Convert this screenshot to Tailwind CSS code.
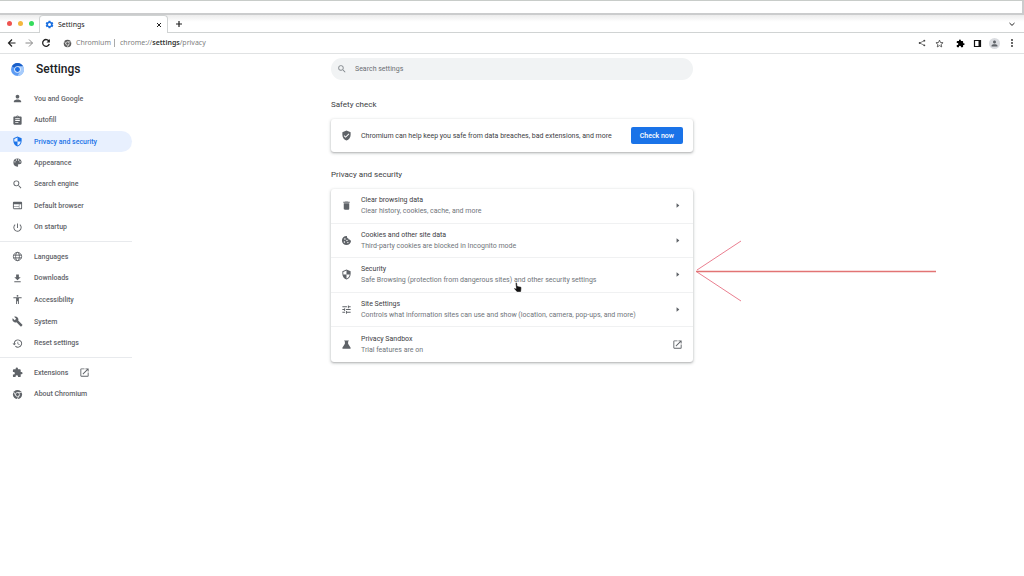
<!DOCTYPE html>
<html lang="en">
<head>
<meta charset="utf-8">
<title>Settings</title>
<script src="https://cdn.jsdelivr.net/npm/@tailwindcss/browser@4"></script>
</head>
<body class="relative min-h-screen overflow-x-hidden bg-white font-['Roboto',sans-serif] text-[7px] leading-[10px] text-[#3c4043]">

<svg class="hidden">
  <symbol id="person" viewBox="0 0 24 24"><path d="M12 12c2.200 0 4-1.800 4-4s-1.800-4-4-4-4 1.800-4 4 1.800 4 4 4zm0 2c-2.700 0-8 1.300-8 4v2h16v-2c0-2.700-5.300-4-8-4z"/></symbol>
  <symbol id="clipboard" viewBox="0 0 24 24"><path d="M19 3h-4.200a3 3 0 0 0-5.600 0H5a2 2 0 0 0-2 2v14c0 1.100.9 2 2 2h14a2 2 0 0 0 2-2V5a2 2 0 0 0-2-2zm-7 0a1 1 0 1 1 0 2 1 1 0 0 1 0-2zm2 14H7v-2h7v2zm3-4H7v-2h10v2zm0-4H7V7h10v2z"/></symbol>
  <symbol id="shield" viewBox="0 0 24 24"><path d="M12 1 3 5v6c0 5.550 3.840 10.740 9 12 5.160-1.260 9-6.450 9-12V5l-9-4zm0 10.990h7c-.53 4.120-3.280 7.790-7 8.940V12H5V6.300l7-3.110v8.800z"/></symbol>
  <symbol id="shieldcheck" viewBox="0 0 24 24"><path d="M12 1 3 5v6c0 5.550 3.840 10.740 9 12 5.160-1.260 9-6.450 9-12V5l-9-4zm-2 16-4-4 1.410-1.410L10 14.170l6.590-6.590L18 9l-8 8z"/></symbol>
  <symbol id="palette" viewBox="0 0 24 24"><path d="M12 3a9 9 0 0 0 0 18c.83 0 1.500-.67 1.500-1.500 0-.39-.15-.74-.39-1.010-.23-.26-.38-.61-.38-.99 0-.83.67-1.500 1.500-1.500H16a5 5 0 0 0 5-5c0-4.420-4.030-8-9-8zm-5.500 9a1.500 1.500 0 1 1 0-3 1.500 1.500 0 0 1 0 3zm3-4a1.500 1.500 0 1 1 0-3 1.500 1.500 0 0 1 0 3zm5 0a1.500 1.500 0 1 1 0-3 1.500 1.500 0 0 1 0 3zm3 4a1.500 1.500 0 1 1 0-3 1.500 1.500 0 0 1 0 3z"/></symbol>
  <symbol id="search" viewBox="0 0 24 24"><path d="M15.500 14h-.79l-.28-.27A6.470 6.470 0 0 0 16 9.500 6.500 6.500 0 1 0 9.500 16c1.610 0 3.090-.59 4.230-1.570l.27.28v.79l5 4.990L20.490 19l-4.990-5zm-6 0a4.500 4.500 0 1 1 0-9 4.500 4.500 0 0 1 0 9z"/></symbol>
  <symbol id="browser" viewBox="0 0 24 24"><path d="M20 4H4a2 2 0 0 0-2 2v12c0 1.100.9 2 2 2h16a2 2 0 0 0 2-2V6a2 2 0 0 0-2-2zm-5 14H4v-4h11v4zm0-5H4V9h11v4zm5 5h-4V9h4v9z"/></symbol>
  <symbol id="power" viewBox="0 0 24 24"><path d="M13 3h-2v10h2V3zm4.830 2.170-1.420 1.420A6.920 6.920 0 0 1 19 12a7 7 0 1 1-11.420-5.420L6.170 5.170A9 9 0 1 0 21 12c0-2.740-1.230-5.180-3.170-6.830z"/></symbol>
  <symbol id="globe" viewBox="0 0 24 24"><g fill="none" stroke="currentColor" stroke-width="2"><circle cx="12" cy="12" r="9"/><ellipse cx="12" cy="12" rx="4.200" ry="9"/><path d="M3.500 9h17M3.500 15h17"/></g></symbol>
  <symbol id="download" viewBox="0 0 24 24"><path d="M19 9h-4V3H9v6H5l7 7 7-7zM5 18v2h14v-2H5z"/></symbol>
  <symbol id="access" viewBox="0 0 24 24"><path d="M12 2a2 2 0 1 1 0 4 2 2 0 0 1 0-4zm9 7h-6v13h-2v-6h-2v6H9V9H3V7h18v2z"/></symbol>
  <symbol id="wrench" viewBox="0 0 24 24"><path d="m22.700 19-9.100-9.100c.9-2.300.4-5-1.500-6.900-2-2-5-2.400-7.400-1.300L9 6 6 9 1.600 4.700C.4 7.100.9 10.100 2.900 12.100c1.900 1.900 4.600 2.400 6.900 1.500l9.100 9.100c.4.4 1 .4 1.400 0l2.300-2.300c.5-.4.5-1.100.1-1.400z"/></symbol>
  <symbol id="restore" viewBox="0 0 24 24"><path d="M13 3a9 9 0 0 0-9 9H1l3.890 3.890.07.14L9 12H6a7 7 0 1 1 2.060 4.940l-1.420 1.420A9 9 0 1 0 13 3zm-1 5v5l4.280 2.540.72-1.210-3.500-2.080V8H12z"/></symbol>
  <symbol id="puzzle" viewBox="0 0 24 24"><path d="M20.500 11H19V7a2 2 0 0 0-2-2h-4V3.500a2.500 2.500 0 0 0-5 0V5H4a2 2 0 0 0-2 2v3.800h1.500a2.700 2.700 0 0 1 0 5.400H2V20c0 1.100.9 2 2 2h3.800v-1.500a2.700 2.700 0 0 1 5.400 0V22H17a2 2 0 0 0 2-2v-4h1.500a2.500 2.500 0 0 0 0-5z"/></symbol>
  <symbol id="chrome" viewBox="0 0 24 24"><circle cx="12" cy="12" r="10"/><circle cx="12" cy="12" r="4.500" fill="none" stroke="#fff" stroke-width="1.600"/><path d="M12 7.500h9M8.100 14.200 3.600 6.400M15.900 14.200l-4.500 7.800" stroke="#fff" stroke-width="1.600"/></symbol>
  <symbol id="launch" viewBox="0 0 24 24"><path d="M19 19H5V5h7V3H5a2 2 0 0 0-2 2v14c0 1.100.9 2 2 2h14a2 2 0 0 0 2-2v-7h-2v7zM14 3v2h3.590l-9.830 9.830 1.410 1.410L19 6.410V10h2V3h-7z"/></symbol>
  <symbol id="trash" viewBox="0 0 24 24"><path d="M6 19c0 1.100.9 2 2 2h8a2 2 0 0 0 2-2V7H6v12zM19 4h-3.500l-1-1h-5l-1 1H5v2h14V4z"/></symbol>
  <symbol id="cookie" viewBox="0 0 24 24"><path fill-rule="evenodd" d="M12 2a10 10 0 1 0 10 10c-1.500.3-2.700-.6-3-2-2 .2-3.400-1.200-3-3-2 0-3.400-1.700-3-5zM8.500 7a1.800 1.800 0 1 1 0 3.600 1.800 1.800 0 0 1 0-3.600zM7.500 13.500a1.600 1.600 0 1 1 0 3.200 1.600 1.600 0 0 1 0-3.200zM13 10.500a1.500 1.500 0 1 1 0 3 1.500 1.500 0 0 1 0-3zM15 15a1.600 1.600 0 1 1 0 3.200 1.600 1.600 0 0 1 0-3.200z"/></symbol>
  <symbol id="tune" viewBox="0 0 24 24"><path d="M3 17v2h6v-2H3zM3 5v2h10V5H3zm10 16v-2h8v-2h-8v-2h-2v6h2zM7 9v2H3v2h4v2h2V9H7zm14 4v-2H11v2h10zm-6-4h2V7h4V5h-4V3h-2v6z"/></symbol>
  <symbol id="flask" viewBox="0 0 24 24"><path d="M7 3h10v2h-1.500v5.500L21 19c.7 1.200 0 2-1.200 2H4.200C3 21 2.300 20.200 3 19l5.500-8.500V5H7V3z"/></symbol>
  <symbol id="caret" viewBox="0 0 24 24"><path d="m10 7 6 5-6 5z"/></symbol>
  <symbol id="gear" viewBox="0 0 24 24"><path fill-rule="evenodd" d="m9.500 2-.6 2.700-2 1.100-2.600-.8-2.500 4.300 2 1.900v1.600l-2 1.900L4.300 19l2.600-.8 2 1.100.6 2.700h5l.6-2.700 2-1.100 2.600.8 2.500-4.300-2-1.900v-1.600l2-1.900L19.700 5l-2.600.8-2-1.100-.6-2.700zM12 8a4 4 0 1 1 0 8 4 4 0 0 1 0-8z"/></symbol>
</svg>

<div class="h-[15px] border-t border-b-2 border-t-[#c8ccc9] border-b-[#cbcccd] bg-white"><div class="h-full border-r-2 border-[#cbcccd]"></div></div>

<header>
  <div class="flex h-[18px] items-stretch border-b border-[#d0d3d3] bg-linear-to-b from-[#ececec] to-white to-40%">
    <div class="flex w-[39px] items-center gap-[6px] pl-[7px]">
      <span class="size-[5px] rounded-full bg-[#ee5350]"></span><span class="size-[5px] rounded-full bg-[#f3b73e]"></span><span class="size-[5px] rounded-full bg-[#35dc5d]"></span>
    </div>
    <div class="-mb-px flex w-[129px] items-center rounded-t-[4px] border border-b-0 border-[#d0d3d3] bg-white pr-[5px] pl-[5px] font-['Noto_Sans',sans-serif] text-[#222]">
      <svg class="size-[9px] fill-[#1a6fe0]"><use href="#gear"/></svg>
      <span class="ml-[4px] flex-1">Settings</span>
      <button aria-label="Close tab"><svg class="size-[6px]" viewBox="0 0 6 6"><path d="m1 1 4 4M5 1 1 5" stroke="#222" stroke-width="1"/></svg></button>
    </div>
    <button aria-label="New tab" class="ml-[7px]"><svg class="size-[8px]" viewBox="0 0 8 8"><path d="M4 1v6M1 4h6" stroke="#222" stroke-width="1.200"/></svg></button>
    <button aria-label="Search tabs" class="mr-[8px] ml-auto"><svg class="size-[8px]" viewBox="0 0 8 8"><path d="m1.500 3 2.500 2.400L6.500 3" fill="none" stroke="#222" stroke-width="1"/></svg></button>
  </div>
  <div class="flex h-[21px] items-center border-b border-[#e0e2e3] pr-[8px] pl-[7px]">
    <button aria-label="Back"><svg class="size-[10px]" viewBox="0 0 10 10"><path d="M8.500 5h-7M5 1.500 1.500 5 5 8.500" fill="none" stroke="#222" stroke-width="1.200"/></svg></button>
    <button aria-label="Forward" class="ml-[7px]"><svg class="size-[10px]" viewBox="0 0 10 10"><path d="M1.500 5h7M5 1.500 8.500 5 5 8.500" fill="none" stroke="#888" stroke-width="1"/></svg></button>
    <button aria-label="Reload" class="ml-[7px]"><svg class="size-[10px]" viewBox="0 0 10 10"><path d="M8 3.200A3.400 3.400 0 1 0 8.300 6" fill="none" stroke="#222" stroke-width="1.300"/><path d="M8.900 1v3.400H5.500z" fill="#222"/></svg></button>
    <div class="ml-[12px] flex flex-1 items-center font-['Noto_Sans',sans-serif] text-[#808080]">
      <svg class="size-[9px] fill-[#5a5a5a]"><use href="#chrome"/></svg>
      <span class="ml-[4px]">Chromium</span><span class="mr-[5px] ml-[3px] h-[8px] w-px bg-[#aaa]"></span>
      <span>chrome://<span class="font-semibold text-[#333]">settings</span>/privacy</span>
    </div>
    <div class="flex items-center">
      <button aria-label="Share"><svg class="size-[8px]" viewBox="0 0 24 24"><path d="M19 5 5 12l14 7" fill="none" stroke="#444" stroke-width="2"/><g fill="#444"><circle cx="19" cy="5" r="2.800"/><circle cx="5" cy="12" r="2.800"/><circle cx="19" cy="19" r="2.800"/></g></svg></button>
      <button aria-label="Bookmark" class="ml-[9px]"><svg class="size-[9px]" viewBox="0 0 24 24"><path d="m12 3 2.700 6.300 6.800.6-5.200 4.500 1.600 6.700L12 17.500l-5.900 3.600 1.600-6.700-5.200-4.500 6.800-.6z" fill="none" stroke="#444" stroke-width="2.200"/></svg></button>
      <button aria-label="Extensions" class="ml-[12px]"><svg class="size-[9px] fill-black"><use href="#puzzle"/></svg></button>
      <button aria-label="Side panel" class="ml-[8px]"><svg class="size-[9px]" viewBox="0 0 9 9"><path d="M1.500 1.500h6v6h-6z" fill="none" stroke="#111" stroke-width="1.200"/><path d="M5.500 1H8v7H5.500z" fill="#111"/></svg></button>
      <button aria-label="Profile" class="ml-[7px] flex size-[11px] items-center justify-center rounded-full bg-[#dadce0]"><svg class="size-[9px] fill-[#5f6368]"><use href="#person"/></svg></button>
      <button aria-label="Menu" class="ml-[8px]"><svg class="size-[8px]" viewBox="0 0 8 8" fill="#222"><circle cx="4" cy="1" r=".9"/><circle cx="4" cy="4" r=".9"/><circle cx="4" cy="7" r=".9"/></svg></button>
    </div>
  </div>
</header>

<div class="grid grid-cols-[132px_1fr_132px]">
  <aside>
    <div class="flex h-[30px] items-center gap-[12px] pl-[11px]">
      <svg class="size-[13px]" viewBox="0 0 24 24"><circle cx="12" cy="12" r="12" fill="#5c9bf3"/><path d="M12 12 1.600 6A12 12 0 0 1 22.400 6z" fill="#1a5fc8"/><path d="M12 6h10.400A12 12 0 0 1 12 24l5-9z" fill="#a6cbfb"/><circle cx="12" cy="12" r="6" fill="#e8f1fe"/><circle cx="12" cy="12" r="4.600" fill="#1d6fe6"/></svg>
      <h1 class="text-[12px] leading-[16px] font-medium text-[#202124]">Settings</h1>
    </div>
    <nav class="mt-[4px] font-medium text-[#5f6368] [&_a]:flex [&_a]:items-center [&_a]:pl-[12px] [&_span]:ml-[11px] [&_svg]:size-[11px] [&_svg]:fill-current">
      <div class="grid h-[150px] auto-rows-fr">
        <a href="#people"><svg><use href="#person"/></svg><span>You and Google</span></a>
        <a href="#autofill"><svg><use href="#clipboard"/></svg><span>Autofill</span></a>
        <a href="#privacy" aria-current="page" class="rounded-r-full bg-[#e8f0fe] text-[#1a73e8]"><svg><use href="#shield"/></svg><span>Privacy and security</span></a>
        <a href="#appearance"><svg><use href="#palette"/></svg><span>Appearance</span></a>
        <a href="#search-engine"><svg><use href="#search"/></svg><span>Search engine</span></a>
        <a href="#default"><svg><use href="#browser"/></svg><span>Default browser</span></a>
        <a href="#startup"><svg><use href="#power"/></svg><span>On startup</span></a>
      </div>
      <hr class="mt-[3px] mb-[4px] border-[#e8eaed]">
      <div class="grid h-[108px] auto-rows-fr">
        <a href="#languages"><svg><use href="#globe"/></svg><span>Languages</span></a>
        <a href="#downloads"><svg><use href="#download"/></svg><span>Downloads</span></a>
        <a href="#accessibility"><svg><use href="#access"/></svg><span>Accessibility</span></a>
        <a href="#system"><svg><use href="#wrench"/></svg><span>System</span></a>
        <a href="#reset"><svg><use href="#restore"/></svg><span>Reset settings</span></a>
      </div>
      <hr class="mt-[3px] mb-[4px] border-[#e8eaed]">
      <div class="grid h-[43px] auto-rows-fr">
        <a href="#extensions"><svg><use href="#puzzle"/></svg><span class="mr-[11px]">Extensions</span><svg><use href="#launch"/></svg></a>
        <a href="#about"><svg><use href="#chrome"/></svg><span>About Chromium</span></a>
      </div>
    </nav>
  </aside>

  <main class="mx-auto w-full max-w-[362px] pt-[4px]">
    <label class="flex h-[22px] items-center rounded-full bg-[#f1f3f4] pl-[6px]">
      <svg class="size-[10px] fill-[#80868b]"><use href="#search"/></svg>
      <input type="search" aria-label="Search settings" placeholder="Search settings" class="ml-[8px] flex-1 bg-transparent outline-none placeholder:text-[#6b6f73]">
    </label>

    <h2 class="mt-[19px] text-[8px] leading-[12px]">Safety check</h2>
    <section class="mt-[8px] flex h-[33px] items-center rounded-[3px] pr-[10px] pl-[10px] shadow-[0_1px_2px_rgba(60,64,67,0.3),0_1px_3px_1px_rgba(60,64,67,0.12)]">
      <svg class="size-[11px] fill-[#5f6368]"><use href="#shieldcheck"/></svg>
      <p class="ml-[9px] flex-1">Chromium can help keep you safe from data breaches, bad extensions, and more</p>
      <button class="h-[17px] rounded-[2px] bg-[#1a73e8] px-[9px] font-medium text-white">Check now</button>
    </section>

    <h2 class="mt-[17px] text-[8px] leading-[12px]">Privacy and security</h2>
    <section class="mt-[8px] grid h-[173px] auto-rows-fr divide-y divide-[#f0f1f2] rounded-[3px] shadow-[0_1px_2px_rgba(60,64,67,0.3),0_1px_3px_1px_rgba(60,64,67,0.12)] [&_small]:block [&_small]:text-[7px] [&_small]:text-[#70757a] [&_svg]:size-[11px] [&_svg]:fill-[#5f6368] [&>button]:flex [&>button]:items-center [&>button]:px-[10px] [&>button]:text-left [&>button>span]:ml-[9px] [&>button>span]:flex-1 [&>button>span]:pt-px [&>button>span]:leading-[11px]">
      <button><svg><use href="#trash"/></svg><span>Clear browsing data<small>Clear history, cookies, cache, and more</small></span><svg><use href="#caret"/></svg></button>
      <button><svg><use href="#cookie"/></svg><span>Cookies and other site data<small>Third-party cookies are blocked in Incognito mode</small></span><svg><use href="#caret"/></svg></button>
      <button><svg><use href="#shield"/></svg><span>Security<small>Safe Browsing (protection from dangerous sites) and other security settings</small></span><svg><use href="#caret"/></svg></button>
      <button><svg><use href="#tune"/></svg><span>Site Settings<small>Controls what information sites can use and show (location, camera, pop-ups, and more)</small></span><svg><use href="#caret"/></svg></button>
      <button><svg><use href="#flask"/></svg><span>Privacy Sandbox<small>Trial features are on</small></span><svg><use href="#launch"/></svg></button>
    </section>
  </main>
</div>

<svg class="pointer-events-none absolute top-[240px] left-[695px] h-[62px] w-[242px]" viewBox="0 0 242 62" fill="none"><path d="M2 30 46 1M2 32l44 29" stroke="#ea7f90"/><path d="M1 31.500h240" stroke="#e27474" stroke-width="1.300"/></svg>
<svg class="pointer-events-none absolute top-[282px] left-[513px] h-[11px] w-[10px]" viewBox="0 0 10 11"><path d="M2.500 1c0-.8 1.400-.8 1.500 0l.4 3 3.200.7c.6.2.9.6.8 1.200L8 10H4L1.300 7c-.5-.8.4-1.500 1.100-.8l.7.500z" fill="#111" stroke="#fff" stroke-width=".4"/></svg>
</body>
</html>
